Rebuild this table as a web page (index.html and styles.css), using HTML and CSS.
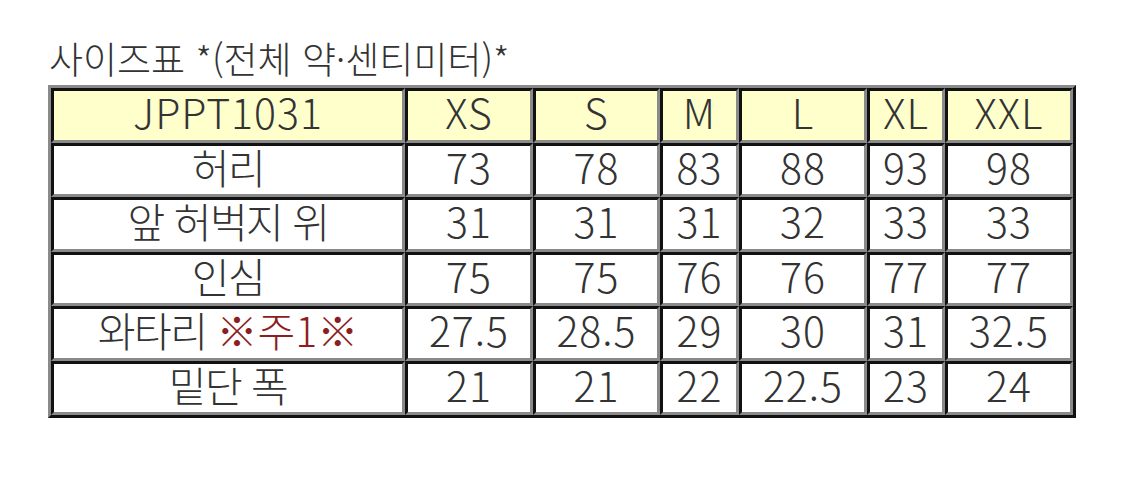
FILE: index.html
```html
<!DOCTYPE html>
<html lang="ko">
<head>
<meta charset="utf-8">
<link rel="stylesheet" href="styles.css">
</head>
<body>
<div class="page">
  <div class="title">사이즈표 *(전체 약·센티미터)*</div>
  <table class="size-table">
    <colgroup>
      <col class="c-label">
      <col class="c-xs">
      <col class="c-s">
      <col class="c-m">
      <col class="c-l">
      <col class="c-xl">
      <col class="c-xxl">
    </colgroup>
    <tr class="head">
      <td>JPPT1031</td><td>XS</td><td>S</td><td>M</td><td>L</td><td>XL</td><td>XXL</td>
    </tr>
    <tr>
      <td class="ko">허리</td><td>73</td><td>78</td><td>83</td><td>88</td><td>93</td><td>98</td>
    </tr>
    <tr>
      <td class="ko">앞 허벅지 위</td><td>31</td><td>31</td><td>31</td><td>32</td><td>33</td><td>33</td>
    </tr>
    <tr>
      <td class="ko">인심</td><td>75</td><td>75</td><td>76</td><td>76</td><td>77</td><td>77</td>
    </tr>
    <tr>
      <td class="ko">와타리 <span class="note">※주1※</span></td><td>27.5</td><td>28.5</td><td>29</td><td>30</td><td>31</td><td>32.5</td>
    </tr>
    <tr>
      <td class="ko">밑단 폭</td><td>21</td><td>21</td><td>22</td><td>22.5</td><td>23</td><td>24</td>
    </tr>
  </table>
</div>
</body>
</html>
```

FILE: styles.css
```css
html, body {
  margin: 0;
  padding: 0;
  background: #ffffff;
}

.page {
  padding: 40px 0 0 48px;
  font-family: "Noto Sans CJK KR", "Noto Sans", sans-serif;
  font-weight: 300;
  color: #333333;
}

.title {
  font-size: 37px;
  line-height: 36px;
  height: 36px;
  padding-left: 1px;
  margin-bottom: 9px;
  white-space: nowrap;
}

.size-table {
  border-collapse: separate;
  border-spacing: 0;
  border: 3px solid;
  border-color: #8a8a8a #111111 #111111 #8a8a8a;
  table-layout: fixed;
  width: 1028px;
}

.c-label { width: 354px; }
.c-xs { width: 128px; }
.c-s { width: 127px; }
.c-m { width: 79px; }
.c-l { width: 128px; }
.c-xl { width: 78px; }
.c-xxl { width: 128px; }

.size-table td {
  border: 3px solid;
  border-color: #111111 #8a8a8a #8a8a8a #111111;
  padding: 0 0 8px 0;
  height: 40.5px;
  text-align: center;
  vertical-align: middle;
  font-size: 41px;
  line-height: 40px;
  letter-spacing: 1px;
  color: #333333;
  white-space: nowrap;
  overflow: visible;
  background: #ffffff;
}

.size-table td.ko {
  letter-spacing: -1.5px;
}

.size-table .head td {
  background: #ffffcc;
}

.note {
  color: #8b1e1e;
  letter-spacing: 0;
}
```
